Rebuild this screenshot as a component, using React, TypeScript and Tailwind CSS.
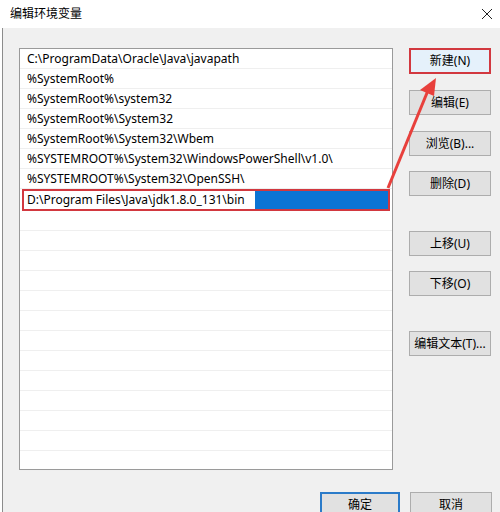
import React from "react";

const paths = [
  "C:\\ProgramData\\Oracle\\Java\\javapath",
  "%SystemRoot%",
  "%SystemRoot%\\system32",
  "%SystemRoot%\\System32",
  "%SystemRoot%\\System32\\Wbem",
  "%SYSTEMROOT%\\System32\\WindowsPowerShell\\v1.0\\",
  "%SYSTEMROOT%\\System32\\OpenSSH\\",
];

const font = { fontFamily: '"Segoe UI", "Noto Sans", "Noto Sans CJK SC", sans-serif' };

const Btn = ({ label, className = "" }: { label: string; className?: string }) => (
  <div
    className={`w-[82px] h-[25px] flex items-center justify-center text-[12px] text-black border border-[#adadad] bg-[#e1e1e1] ${className}`}
  >
    {label}
  </div>
);

export default function App() {
  return (
    <div className="w-[500px] h-[512px] bg-white overflow-hidden flex flex-col" style={font}>
      {/* title bar */}
      <div className="h-[28px] shrink-0 flex items-center justify-between pl-[10px] pr-[6px] text-[12px] text-black">
        <span>编辑环境变量</span>
        <svg width="12" height="12" viewBox="0 0 12 12" className="mr-[1px]">
          <path d="M1 1L11 11M11 1L1 11" stroke="#222" strokeWidth="1" />
        </svg>
      </div>

      {/* body */}
      <div className="relative flex-1 ml-[2px] border-l border-[#8c8c8c] bg-[#f0f0f0] pt-[20px] pl-[16px]">
        <div className="flex">
          {/* list */}
          <div className="w-[374px] h-[422px] bg-white border border-[#9a9a9a] flex flex-col">
            {paths.map((p) => (
              <div
                key={p}
                className="h-[20px] shrink-0 border-b border-[#efefef] pl-[7px] flex items-center text-[12px] text-black leading-none"
              >
                {p}
              </div>
            ))}
            <div className="h-[22px] shrink-0 mx-[2px] border-2 border-[#d2383f] flex">
              <div className="w-[231px] bg-white pl-[3px] flex items-center text-[12px] text-black leading-none">
                D:\Program Files\Java\jdk1.8.0_131\bin
              </div>
              <div className="flex-1 bg-[#0b74d4]" />
            </div>
            {Array.from({ length: 13 }).map((_, i) => (
              <div key={i} className="h-[20px] shrink-0 border-b border-[#efefef]" />
            ))}
          </div>

          {/* side buttons */}
          <div className="ml-[16px] flex flex-col">
            <div className="w-[82px] h-[26px] flex items-center justify-center text-[12px] text-black border-2 border-[#d2383f] bg-[#e5f1fb]">
              新建(N)
            </div>
            <Btn label="编辑(E)" className="mt-[16px]" />
            <Btn label="浏览(B)..." className="mt-[16px]" />
            <Btn label="删除(D)" className="mt-[15px]" />
            <Btn label="上移(U)" className="mt-[35px]" />
            <Btn label="下移(O)" className="mt-[15px]" />
            <Btn label="编辑文本(T)..." className="mt-[35px]" />
          </div>
        </div>

        {/* bottom buttons */}
        <div className="flex justify-end gap-[10px] pr-[8px] mt-[22px]">
          <div className="w-[80px] h-[25px] flex items-center justify-center text-[12px] text-black border-2 border-[#2b7bc9] bg-[#e1e1e1]">
            确定
          </div>
          <Btn label="取消" />
        </div>

        {/* annotation arrow */}
        <svg className="absolute left-0 top-0 pointer-events-none" width="500" height="484">
          <line x1="385" y1="160" x2="426" y2="60" stroke="#e8403c" strokeWidth="3" />
          <polygon points="433,50 417,62 431,68" fill="#e8403c" />
        </svg>
      </div>
    </div>
  );
}
